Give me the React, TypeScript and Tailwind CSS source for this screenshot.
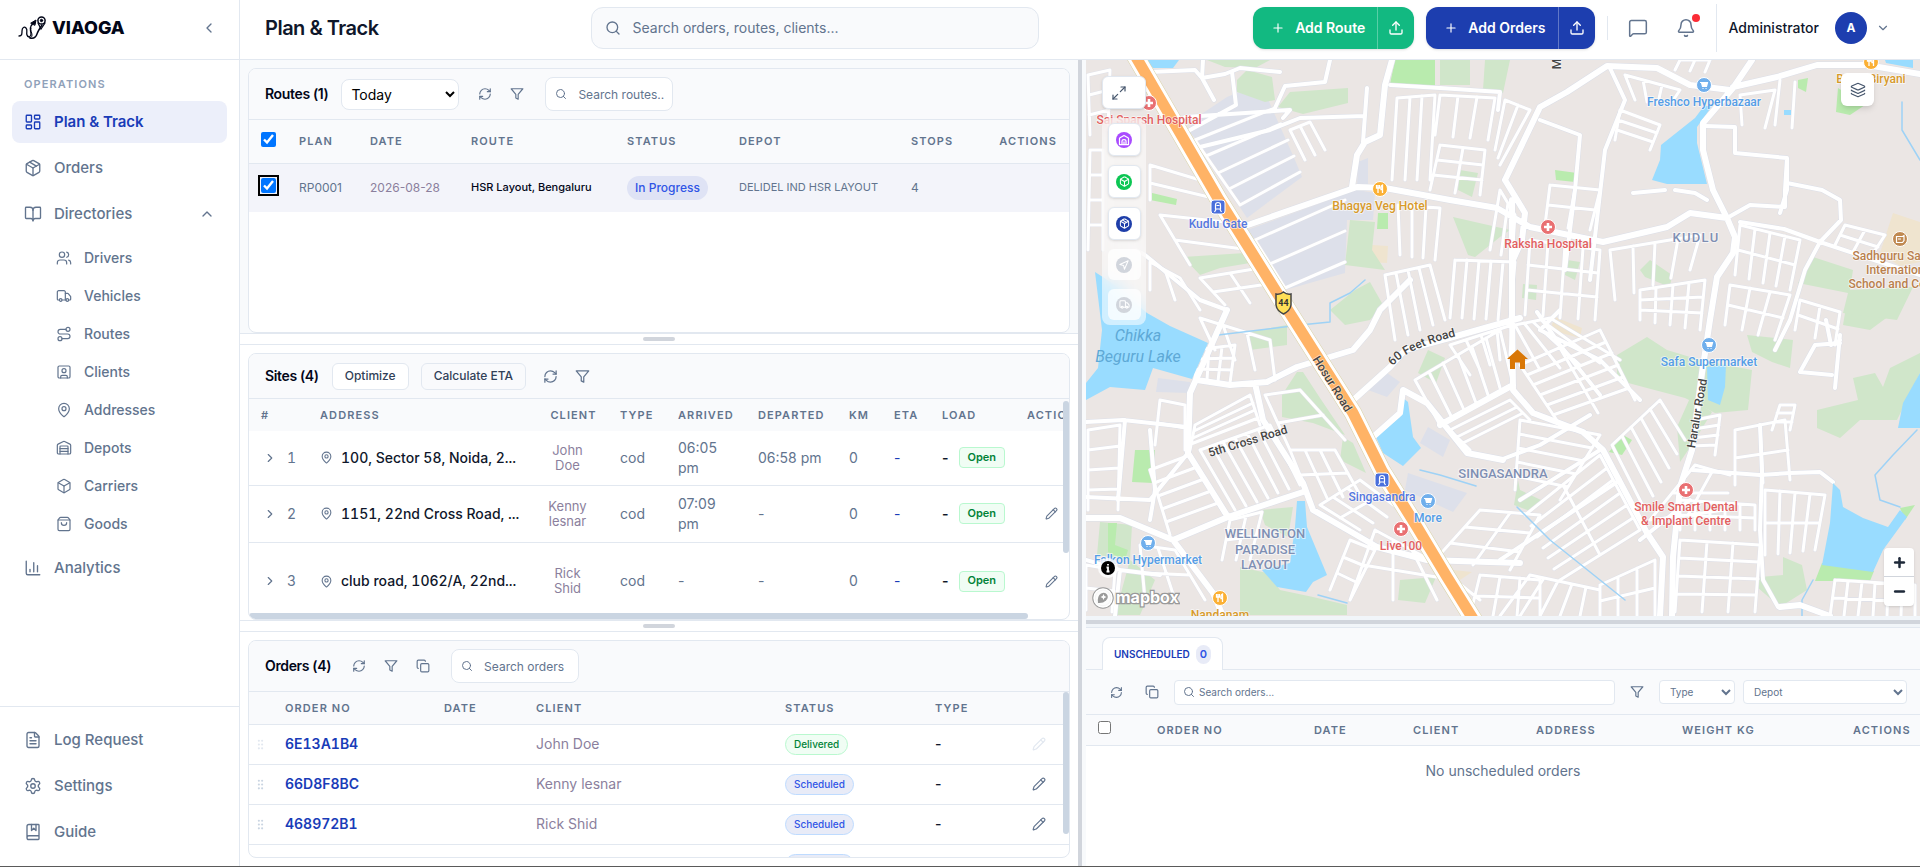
import type { ReactNode } from 'react';
import {
  Bell,
  BookMarked,
  BookOpen,
  Box,
  ChartColumn,
  ChevronDown,
  ChevronLeft,
  ChevronRight,
  ChevronUp,
  Copy,
  FileText,
  GripVertical,
  Layers,
  LayoutDashboard,
  MapPin,
  Maximize2,
  MessageSquare,
  Minus,
  Package,
  Pencil,
  Plus,
  RefreshCw,
  Route,
  Search,
  Settings,
  ShoppingBag,
  SquareUser,
  Truck,
  Upload,
  Users,
  Warehouse,
  type LucideIcon,
} from 'lucide-react';

type NavEntry = { label: string; icon: LucideIcon };

const directories: NavEntry[] = [
  { label: 'Drivers', icon: Users },
  { label: 'Vehicles', icon: Truck },
  { label: 'Routes', icon: Route },
  { label: 'Clients', icon: SquareUser },
  { label: 'Addresses', icon: MapPin },
  { label: 'Depots', icon: Warehouse },
  { label: 'Carriers', icon: Box },
  { label: 'Goods', icon: ShoppingBag },
];

const footerLinks: NavEntry[] = [
  { label: 'Log Request', icon: FileText },
  { label: 'Settings', icon: Settings },
  { label: 'Guide', icon: BookMarked },
];

const sites = [
  { id: 1, address: '100, Sector 58, Noida, 2...', client: 'John Doe', arrived: '06:05 pm', departed: '06:58 pm', height: 'h-[54px]', editable: false },
  { id: 2, address: '1151, 22nd Cross Road, ...', client: 'Kenny lesnar', arrived: '07:09 pm', departed: '-', height: 'h-[57px]', editable: true },
  { id: 3, address: 'club road, 1062/A, 22nd...', client: 'Rick Shid', arrived: '-', departed: '-', height: 'h-[78px]', editable: true },
];

const orders = [
  { no: '6E13A1B4', client: 'John Doe', status: 'Delivered' },
  { no: '66D8F8BC', client: 'Kenny lesnar', status: 'Scheduled' },
  { no: '468972B1', client: 'Rick Shid', status: 'Scheduled' },
  { no: '', client: '', status: 'Scheduled' },
];

const Funnel = ({ size = 14 }: { size?: number }) => (
  <svg width={size} height={size} viewBox="0 0 24 24" fill="none" stroke="currentColor" strokeWidth="2" strokeLinecap="round" strokeLinejoin="round">
    <path d="M22 3H2l8 9.46V19l4 2v-8.54L22 3z" />
  </svg>
);

const IconButton = ({ label, children }: { label: string; children: ReactNode }) => (
  <button type="button" aria-label={label} className="flex h-6 w-6 items-center justify-center text-slate-500">
    {children}
  </button>
);

/* ---------- Sidebar ---------- */

const Logo = () => (
  <a href="#" className="flex items-center gap-[6px] text-slate-950">
    <svg width="28" height="24" viewBox="0 0 28 24" fill="none" stroke="currentColor" strokeLinecap="round">
      <path d="M1 20c3 0 3-2 3-5s2-5 4-3 0 4 1 7 4 2 4-1-2-5 0-8l3-4" strokeWidth="1.3" />
      <path d="M12 22c4 1 6-1 7-4s3-6 5-9" strokeWidth="1.5" />
      <path d="M10 20c1 3 4 2 4-1s-2-4-1-7" strokeWidth="1" />
      <path d="m13 7 5-3-1 5z" fill="currentColor" />
      <circle cx="23.500" cy="4.500" r="3.600" strokeWidth="1.500" />
      <circle cx="23.500" cy="4.500" r="1.200" fill="currentColor" />
      <path d="m20 7 3 6 4-6" strokeWidth="1.3" />
    </svg>
    <span className="text-lg font-extrabold">VIAOGA</span>
  </a>
);

const NavItem = ({ label, icon: Icon, active, children }: NavEntry & { active?: boolean; children?: ReactNode }) => (
  <a
    href="#"
    className={
      active
        ? 'flex h-[42px] items-center gap-3 rounded-lg bg-[#eceffa] px-3 text-[15px] font-semibold text-blue-800'
        : 'flex h-[42px] items-center gap-3 rounded-lg px-3 text-[15px] font-medium text-slate-500'
    }
  >
    <Icon size={18} strokeWidth={1.8} />
    {label}
    {children}
  </a>
);

const Sidebar = () => (
  <aside className="flex w-[240px] shrink-0 flex-col border-r border-slate-200 bg-white">
    <div className="flex h-[60px] shrink-0 items-center justify-between border-b border-slate-200 pr-[22px] pb-1 pl-[18px]">
      <Logo />
      <button type="button" aria-label="Collapse sidebar" className="text-slate-500">
        <ChevronLeft size={16} />
      </button>
    </div>
    <nav className="flex flex-1 flex-col gap-1 px-3 pt-4">
      <h2 className="mb-1 px-3 text-[11px] leading-[17px] font-semibold tracking-widest text-slate-400">OPERATIONS</h2>
      <NavItem label="Plan & Track" icon={LayoutDashboard} active />
      <NavItem label="Orders" icon={Package} />
      <NavItem label="Directories" icon={BookOpen}>
        <ChevronUp size={16} className="ml-auto" />
      </NavItem>
      <ul>
        {directories.map(({ label, icon: Icon }) => (
          <li key={label}>
            <a href="#" className="flex h-[38px] items-center gap-3 pl-11 text-sm font-medium text-slate-500">
              <Icon size={16} strokeWidth={1.8} />
              {label}
            </a>
          </li>
        ))}
      </ul>
      <NavItem label="Analytics" icon={ChartColumn} />
    </nav>
    <div className="flex flex-col gap-1 border-t border-slate-200 px-3 pt-3 pb-[13px]">
      {footerLinks.map((item) => (
        <NavItem key={item.label} {...item} />
      ))}
    </div>
  </aside>
);

/* ---------- Header ---------- */

const SplitButton = ({ label, color }: { label: string; color: string }) => (
  <div className={`flex h-[42px] items-stretch overflow-hidden rounded-xl text-white shadow-sm ${color}`}>
    <button type="button" className="flex items-center gap-[10px] pr-3 pl-[18px] text-sm font-semibold">
      <Plus size={14} />
      {label}
    </button>
    <button type="button" aria-label={`Import for ${label}`} className="flex w-[37px] items-center justify-center border-l border-white/30">
      <Upload size={16} />
    </button>
  </div>
);

const Header = () => (
  <header className="flex h-[60px] shrink-0 items-center border-b border-slate-200 bg-white pr-[30px] pb-1 pl-[25px]">
    <h1 className="text-xl font-semibold tracking-tight text-slate-900">Plan &amp; Track</h1>
    <label className="mr-auto ml-[212px] flex h-[42px] w-[448px] items-center gap-3 rounded-xl border border-slate-200 bg-[#f9fafc] px-[13px]">
      <Search size={16} className="text-slate-500" />
      <input type="text" aria-label="Search" placeholder="Search orders, routes, clients..." className="h-10 flex-1 bg-transparent text-sm outline-none placeholder:text-slate-500" />
    </label>
    <div className="flex items-center gap-3">
      <SplitButton label="Add Route" color="bg-[#12b981]" />
      <SplitButton label="Add Orders" color="bg-[#1d3eaf]" />
    </div>
    <span className="ml-3 h-6 w-px bg-slate-200" />
    <button type="button" aria-label="Messages" className="ml-5 text-slate-500">
      <MessageSquare size={20} strokeWidth={1.8} />
    </button>
    <button type="button" aria-label="Notifications" className="relative ml-7 text-slate-500">
      <Bell size={20} strokeWidth={1.8} />
      <span className="absolute -top-1 right-[-4px] h-2 w-2 rounded-full bg-red-500" />
    </button>
    <span className="ml-5 h-12 w-px bg-slate-200" />
    <button type="button" className="ml-3 flex items-center text-sm font-medium text-slate-900">
      Administrator
      <span className="ml-4 flex h-8 w-8 items-center justify-center rounded-full bg-[#1d3eaf] text-xs font-bold text-white">A</span>
      <ChevronDown size={14} className="ml-[9px] text-slate-500" />
    </button>
  </header>
);

/* ---------- Shared panel pieces ---------- */

const RowHandle = () => (
  <div className="flex items-center justify-center border-y border-slate-200 bg-white">
    <span className="h-1 w-8 rounded-full bg-gray-300" />
  </div>
);

const SearchBox = ({ label, placeholder }: { label: string; placeholder: string }) => (
  <label className="ml-1 flex h-[34px] w-32 items-center gap-[11px] rounded-lg border border-slate-200 bg-white pl-[9px]">
    <Search size={12} className="shrink-0 text-slate-500" />
    <input type="text" aria-label={label} placeholder={placeholder} className="h-8 w-full min-w-0 bg-transparent text-xs outline-none placeholder:text-slate-500" />
  </label>
);

const PanelTitle = ({ children }: { children: ReactNode }) => (
  <h2 className="text-sm font-semibold tracking-tight text-slate-950">{children}</h2>
);

const HeadCell = ({ children, align = 'text-left' }: { children?: ReactNode; align?: string }) => (
  <th scope="col" className={`pl-3 text-[11px] font-semibold tracking-widest whitespace-nowrap text-slate-500 ${align}`}>
    {children}
  </th>
);

/* ---------- Routes ---------- */

const RoutesPanel = () => (
  <section className="flex min-h-0 flex-col bg-slate-50 px-2 pt-2">
    <div className="flex min-h-0 flex-1 flex-col overflow-hidden rounded-lg border border-slate-200 bg-white">
      <div className="flex h-[51px] shrink-0 items-center border-b border-slate-200 bg-[#f9fafc] px-4">
        <PanelTitle>Routes (1)</PanelTitle>
        <select aria-label="Period" className="ml-[13px] h-[31px] w-[118px] rounded-lg border border-slate-200 bg-white px-[5px] text-sm text-black">
          <option>Today</option>
        </select>
        <div className="ml-[14px] flex items-center gap-2">
          <IconButton label="Refresh routes"><RefreshCw size={14} /></IconButton>
          <IconButton label="Filter routes"><Funnel size={14} /></IconButton>
          <div className="pl-1"><SearchBox label="Search routes" placeholder="Search routes.." /></div>
        </div>
      </div>
      <table className="w-full table-fixed">
        <colgroup>
          <col className="w-[38px]" />
          <col className="w-[71px]" />
          <col className="w-[101px]" />
          <col className="w-[156px]" />
          <col className="w-[112px]" />
          <col className="w-[172px]" />
          <col className="w-[86px]" />
          <col />
        </colgroup>
        <thead>
          <tr className="h-[43px] border-b border-slate-200 bg-[#f9fafc]">
            <th className="pl-3 text-left">
              <input type="checkbox" aria-label="Select all routes" defaultChecked className="mb-1 block h-[15px] w-[15px]" />
            </th>
            <HeadCell>PLAN</HeadCell>
            <HeadCell>DATE</HeadCell>
            <HeadCell>ROUTE</HeadCell>
            <HeadCell>STATUS</HeadCell>
            <HeadCell>DEPOT</HeadCell>
            <HeadCell>STOPS</HeadCell>
            <HeadCell align="pr-3 text-right">ACTIONS</HeadCell>
          </tr>
        </thead>
        <tbody>
          <tr className="h-[49px] bg-[#f3f4fa] text-xs whitespace-nowrap text-slate-500">
            <td className="pl-3">
              <input type="checkbox" aria-label="Select RP0001" defaultChecked className="mb-1 block h-[15px] w-[15px] rounded-[3px] outline-2 outline-offset-1 outline-black" />
            </td>
            <td className="pl-3">RP0001</td>
            <td className="pl-3 text-[#8b7f9d]">2026-08-28</td>
            <td className="pl-3 text-[11px] font-medium text-slate-950">HSR Layout, Bengaluru</td>
            <td className="pl-3">
              <span className="inline-flex h-6 items-center rounded-full bg-[#dfe3f5] px-2 font-medium text-[#2f55e6]">In Progress</span>
            </td>
            <td className="pl-3 text-[11px]">DELIDEL IND HSR LAYOUT</td>
            <td className="pl-3">4</td>
            <td />
          </tr>
        </tbody>
      </table>
    </div>
  </section>
);

/* ---------- Sites ---------- */

const SitesPanel = () => (
  <section className="flex min-h-0 flex-col bg-white px-2 pt-2">
    <div className="relative flex min-h-0 flex-1 flex-col overflow-hidden rounded-lg border border-slate-200">
      <div className="flex h-[45px] shrink-0 items-center border-b border-slate-200 bg-[#f9fafc] px-4">
        <PanelTitle>Sites (4)</PanelTitle>
        <button type="button" className="ml-[13px] h-[27px] rounded-md border border-slate-200 bg-white px-3 text-xs font-medium text-slate-700">Optimize</button>
        <button type="button" className="ml-3 h-[27px] rounded-md border border-slate-200 px-3 text-xs font-medium text-slate-700">Calculate ETA</button>
        <div className="ml-3 flex items-center gap-2">
          <IconButton label="Refresh sites"><RefreshCw size={15} /></IconButton>
          <IconButton label="Filter sites"><Funnel size={15} /></IconButton>
        </div>
      </div>
      <div className="min-h-0 flex-1 overflow-hidden">
        <table className="w-full min-w-[880px] table-fixed">
          <colgroup>
            <col className="w-[59px]" />
            <col className="w-[219px]" />
            <col className="w-[81px]" />
            <col className="w-[58px]" />
            <col className="w-[80px]" />
            <col className="w-[91px]" />
            <col className="w-[45px]" />
            <col className="w-[48px]" />
            <col className="w-[85px]" />
            <col />
          </colgroup>
          <thead>
            <tr className="h-8 bg-[#f9fafc]">
              <HeadCell>#</HeadCell>
              <HeadCell>ADDRESS</HeadCell>
              <HeadCell align="pr-0 text-center">CLIENT</HeadCell>
              <HeadCell>TYPE</HeadCell>
              <HeadCell>ARRIVED</HeadCell>
              <HeadCell>DEPARTED</HeadCell>
              <HeadCell>KM</HeadCell>
              <HeadCell>ETA</HeadCell>
              <HeadCell>LOAD</HeadCell>
              <HeadCell>ACTIONS</HeadCell>
            </tr>
          </thead>
          <tbody>
            {sites.map((site) => (
              <tr key={site.id} className={`${site.height} border-b border-slate-200 text-sm text-slate-500`}>
                <td className="pl-[14px]">
                  <button type="button" aria-label={`Expand site ${site.id}`} className="flex items-center gap-[10px] tabular-nums">
                    <ChevronRight size={14} />
                    {site.id}
                  </button>
                </td>
                <td className="pl-3">
                  <span className="flex items-center gap-2 font-medium whitespace-nowrap text-slate-900 tabular-nums">
                    <MapPin size={13} className="text-slate-500" />
                    {site.address}
                  </span>
                </td>
                <td className="px-5 text-center text-[13px] leading-[15px] text-[#8b7f9d]">{site.client}</td>
                <td className="pl-3">cod</td>
                <td className="px-3">{site.arrived}</td>
                <td className="pl-3 whitespace-nowrap">{site.departed}</td>
                <td className="pl-3">0</td>
                <td className="pl-3 text-blue-800">-</td>
                <td className="pl-3">
                  <span className="flex items-center gap-[10px] font-semibold text-slate-900">
                    -
                    <span className="flex h-[21px] items-center rounded border border-green-200 bg-green-50 px-2 text-[11px] text-green-700">Open</span>
                  </span>
                </td>
                <td className="pl-[30px]">
                  {site.editable && (
                    <button type="button" aria-label={`Edit site ${site.id}`} className="block">
                      <Pencil size={13} />
                    </button>
                  )}
                </td>
              </tr>
            ))}
          </tbody>
        </table>
      </div>
      <span className="absolute top-[47px] right-0 h-[152px] w-[6px] rounded-full bg-slate-300" />
      <span className="absolute bottom-0 left-0 h-[6px] w-[95%] rounded-full bg-slate-300" />
    </div>
  </section>
);

/* ---------- Orders ---------- */

const OrdersPanel = () => (
  <section className="flex min-h-0 flex-col bg-white p-2">
    <div className="relative flex min-h-0 flex-1 flex-col overflow-hidden rounded-lg border border-slate-200">
      <div className="flex h-[51px] shrink-0 items-center border-b border-slate-200 bg-[#f9fafc] px-4">
        <PanelTitle>Orders (4)</PanelTitle>
        <div className="ml-4 flex items-center gap-2">
          <IconButton label="Refresh orders"><RefreshCw size={14} /></IconButton>
          <IconButton label="Filter orders"><Funnel size={14} /></IconButton>
          <IconButton label="Copy orders"><Copy size={14} /></IconButton>
          <div className="pl-1"><SearchBox label="Search orders" placeholder="Search orders" /></div>
        </div>
      </div>
      <div className="min-h-0 flex-1 overflow-hidden">
        <table className="w-full table-fixed">
          <colgroup>
            <col className="w-6" />
            <col className="w-[159px]" />
            <col className="w-[92px]" />
            <col className="w-[249px]" />
            <col className="w-[150px]" />
            <col />
            <col className="w-[50px]" />
          </colgroup>
          <thead>
            <tr className="h-8 border-b border-slate-200 bg-[#f9fafc]">
              <HeadCell />
              <HeadCell>ORDER NO</HeadCell>
              <HeadCell>DATE</HeadCell>
              <HeadCell>CLIENT</HeadCell>
              <HeadCell>STATUS</HeadCell>
              <HeadCell>TYPE</HeadCell>
              <HeadCell />
            </tr>
          </thead>
          <tbody>
            {orders.map((order, index) => {
              const delivered = order.status === 'Delivered';
              return (
                <tr key={index} className="h-10 border-b border-slate-200 text-sm">
                  <td className={delivered ? 'pl-[5px] text-slate-200' : 'pl-[5px] text-slate-300'}>
                    <GripVertical size={13} />
                  </td>
                  <td className="pl-3 font-semibold text-blue-800 tabular-nums">{order.no}</td>
                  <td />
                  <td className="pl-3 text-[#8b7f9d]">{order.client}</td>
                  <td className="pl-3">
                    <span
                      className={
                        delivered
                          ? 'inline-flex h-[21px] items-center rounded-full border border-green-200 bg-green-50 px-2 align-middle text-[10px] font-medium text-green-700'
                          : 'inline-flex h-[21px] items-center rounded-full border border-blue-200 bg-[#e8ebf7] px-2 align-middle text-[10px] font-medium text-[#2f55e6]'
                      }
                    >
                      {order.status}
                    </span>
                  </td>
                  <td className="pl-3 font-medium text-slate-900">-</td>
                  <td className={delivered ? 'pl-[13px] text-slate-200' : 'pl-[13px] text-slate-500'}>
                    <button type="button" aria-label={`Edit order ${order.no}`} disabled={delivered} className="block">
                      <Pencil size={14} />
                    </button>
                  </td>
                </tr>
              );
            })}
          </tbody>
        </table>
      </div>
      <span className="absolute top-[51px] right-0 h-[142px] w-[6px] rounded-full bg-slate-300" />
    </div>
  </section>
);

/* ---------- Map ---------- */

const LAND = {
  industrial: [
    '1257,85 1267,97 1283,133 1295,160 1302,177 1247,218 1222,180 1197,140 1187,130 1203,113 1227,97',
    '1247,230 1357,190 1375,193 1373,220 1347,220 1345,273 1285,290',
    '1358,162 1368,158 1368,190 1357,188',
    '1158,378 1190,382 1190,393 1156,392',
    '1387,373 1400,382 1387,397 1368,390',
    '1428,427 1450,440 1443,457 1420,443',
    '1408,473 1467,493 1453,512 1405,490',
  ],
  sand: [
    '1893,213 1920,222 1920,262 1900,266 1880,253',
    '1555,317 1582,328 1580,338 1550,330',
    '1372,245 1388,246 1387,263 1370,262',
    '1453,570 1472,572 1460,580',
  ],
  park: [
    '1207,60 1270,60 1255,68 1225,67',
    '1237,80 1247,70 1272,77 1275,100 1265,102 1237,92',
    '1278,107 1290,92 1348,88 1348,103 1303,114',
    '1440,60 1470,60 1470,85 1440,85',
    '1485,60 1510,60 1503,93 1483,90',
    '1183,257 1245,253 1250,263 1220,268 1200,275',
    '1350,220 1375,222 1372,250 1385,270 1345,265',
    '1453,217 1510,230 1500,237 1475,257 1468,255',
    '1330,310 1355,290 1370,282 1383,305 1370,320 1345,325',
    '1247,332 1287,325 1287,345 1250,350',
    '1282,395 1297,372 1303,372 1320,398 1345,435 1313,423 1282,417',
    '1343,437 1353,443 1366,473 1340,460',
    '1428,350 1445,358 1436,383 1418,373',
    '1100,522 1132,525 1130,560 1097,555',
    '1130,560 1155,580 1140,615 1115,615',
    '1260,510 1293,507 1288,537 1265,525',
    '1240,567 1267,573 1280,590 1313,597 1347,605 1347,615 1240,615',
    '1400,580 1436,577 1425,603 1398,600',
    '1617,355 1647,337 1667,350 1700,360 1752,370 1748,410 1715,413 1685,398 1647,388 1617,380',
    '1690,398 1712,412 1695,440 1680,462 1677,427',
    '1747,335 1793,340 1790,368 1772,362 1752,352',
    '1845,313 1893,313 1870,330 1843,325',
    '1817,410 1858,400 1853,378 1875,373 1883,387 1890,368 1920,353 1920,373 1897,420 1860,420 1840,438 1817,428',
    '1813,257 1853,270 1850,290 1913,287 1897,320 1843,313 1848,293 1798,283',
    '1783,557 1802,565 1807,590 1780,607 1757,587 1760,577 1783,575',
    '1460,170 1478,173 1472,197 1458,190',
    '1567,260 1580,262 1575,280 1565,275',
    '1523,284 1537,285 1536,300 1522,298',
    '1640,270 1650,260 1672,275 1670,287 1645,277',
    '1518,480 1520,490 1541,500 1530,511 1514,505',
  ],
  lawn: [
    '1395,60 1435,60 1435,86 1390,84',
    '1135,450 1155,450 1153,483 1132,482',
    '1108,523 1117,523 1115,545 1128,550 1125,560 1108,552',
    '1623,435 1632,440 1622,455 1609,452',
    '1555,170 1577,173 1575,182 1556,180',
    '1798,80 1808,78 1806,92 1798,88',
    '1838,88 1865,105 1850,115 1836,112',
    '1378,213 1388,213 1388,229 1377,229',
    '1148,192 1177,199 1176,205 1150,200',
    '1815,581 1822,563 1874,571 1870,581',
    '1900,508 1915,505 1905,520',
  ],
  water: [
    '1146,60 1179,60 1173,68 1153,68',
    '1095,272 1115,285 1147,313 1170,326 1208,343 1192,379 1153,368 1145,390 1110,387 1086,400 1086,383 1098,368 1102,330',
    '1712,106 1697,127 1697,143 1707,184 1667,184 1652,180 1660,160 1661,145 1695,118 1704,106',
    '1403,398 1408,402 1413,437 1421,448 1403,466 1383,453 1376,437 1400,417',
    '1297,501 1305,501 1307,527 1327,575 1313,582 1306,592 1277,587 1262,570 1290,563 1295,527',
    '1707,367 1726,365 1725,387 1720,405 1708,400',
    '1920,373 1903,403 1898,428 1920,428',
    '1833,483 1840,490 1843,507 1863,518 1888,527 1900,510 1907,517 1883,550 1873,572 1822,565 1830,523',
    '1885,60 1913,60 1913,68 1886,63',
    '1784,110 1791,110 1791,115 1784,115',
  ],
};

const canals = [
  'M1917 430 1893 455 1875 475 1880 500 1900 507',
  'M1813 580 1802 600 1802 616',
  'M1517 507 1550 540 1600 580 1625 600',
  'M1902 102V130L1920 160',
  'M1365 280 1350 293 1330 303V322L1300 325 1218 335',
  'M1420 470 1440 475 1476 486',
  'M1318 595 1347 603',
];

const mainRoads = [
  'M1245 226 1357 187 1385 188 1450 200 1497 208 1530 227 1603 242 1667 227 1690 213 1727 218',
  'M1352 187 1357 155 1365 142 1380 135 1385 85 1392 60',
  'M1505 180 1540 107 1567 92 1607 66 1657 68 1690 85 1730 90',
  'M1752 60 1733 88 1703 123V150L1713 190 1727 218 1735 237 1733 253 1717 277 1710 320 1702 373 1692 450 1680 487 1673 557 1672 616',
  'M1733 87 1777 77 1817 65 1867 65 1920 74',
  'M1227 310 1190 393 1188 453 1228 517',
  'M1197 380 1230 385 1267 382 1297 367 1353 350 1370 330 1380 310 1410 280',
  'M1255 383 1263 420 1303 483 1313 510 1353 533 1377 547 1427 560 1520 563',
  'M1086 518 1120 518 1173 540 1213 593 1223 616',
  'M1173 540 1228 517 1303 492',
  'M1350 403 1390 367 1405 350 1453 337 1520 318',
  'M1373 437 1400 413 1403 390 1427 403 1467 453 1503 460',
  'M1512 200V310L1513 390 1533 413 1583 432 1603 450 1647 533 1663 557 1660 616',
  'M1505 180 1525 213 1522 240 1512 262',
  'M1780 607 1800 605 1830 616',
  'M1440 425 1513 385',
];

const sideRoads = [
  'M1086 422 1123 420 1187 427',
  'M1390 85 1440 88 1500 92 1498 110',
  'M1150 72 1195 70 1202 78 1225 74 1240 68 1280 72',
  'M1203 60 1202 78 1214 100M1232 72 1236 105 1190 130',
  'M1185 117 1290 110 1283 118M1275 108 1285 86 1325 82 1330 60',
  'M1365 116 1300 118 1270 130 1200 147M1367 88 1363 142',
  'M1118 240 1145 255 1200 300 1227 310',
  'M1086 497 1150 500 1188 453M1125 420 1118 500M1150 430 1155 490 1150 520',
  'M1740 222 1784 229 1820 242 1880 262 1920 275',
  'M1727 218 1750 205 1785 207 1785 190 1787 158 1735 153V127L1705 126',
  'M1787 158 1787 190 1780 213M1787 183 1822 190 1840 200 1841 220 1820 242',
  'M1820 242 1805 270 1790 320 1775 350',
  'M1692 470 1760 475 1790 473 1820 472 1833 482',
  'M1760 425 1762 472 1760 530 1763 580 1778 607',
  'M1826 320 1831 345 1840 340M1840 335 1835 388M1840 343 1815 345 1800 372 1832 375',
  'M1540 120 1580 135 1575 190 1565 270',
  'M1610 68 1625 100 1605 150 1590 280',
  'M1675 190 1695 193 1707 200M1633 193 1665 190',
  'M1560 310 1540 330 1600 360 1640 400M1537 312 1560 345 1600 395',
  'M1500 460 1540 445 1590 415M1520 500 1600 450',
  'M1640 540 1690 500M1500 560 1590 500 1620 480',
  'M1086 560 1120 570 1115 616M1120 570 1160 575',
];

// Street grids: corners a, b, c, d, then streets from side ab to dc and from ad to bc
const grids: number[][] = [
  [1088, 75, 1110, 70, 1108, 130, 1090, 135, 1, 3],
  [1090, 150, 1103, 150, 1103, 250, 1088, 250, 1, 4],
  [1150, 165, 1200, 180, 1225, 215, 1150, 200, 1, 2],
  [1160, 215, 1225, 222, 1260, 275, 1190, 265, 1, 2],
  [1200, 278, 1260, 268, 1275, 300, 1225, 305, 2, 2],
  [1195, 140, 1240, 205, 1300, 172, 1275, 108, 4, 1],
  [1255, 240, 1285, 288, 1345, 262, 1345, 200, 2, 1],
  [1290, 130, 1310, 122, 1325, 150, 1305, 160, 2, 1],
  [1397, 98, 1435, 95, 1430, 180, 1392, 180, 3, 1],
  [1440, 95, 1495, 98, 1488, 140, 1435, 135, 3, 1],
  [1440, 145, 1485, 150, 1480, 195, 1430, 190, 2, 3],
  [1398, 205, 1440, 208, 1435, 260, 1400, 255, 3, 1],
  [1455, 260, 1515, 262, 1510, 320, 1450, 318, 5, 1],
  [1385, 275, 1430, 265, 1445, 320, 1395, 340, 4, 1],
  [1505, 100, 1530, 110, 1500, 165, 1495, 150, 2, 1],
  [1500, 190, 1515, 215, 1512, 260, 1490, 250, 2, 1],
  [1550, 185, 1600, 190, 1590, 230, 1545, 225, 2, 2],
  [1530, 240, 1600, 250, 1595, 320, 1525, 315, 4, 3],
  [1610, 250, 1700, 235, 1690, 270, 1615, 300, 4, 1],
  [1640, 290, 1705, 280, 1700, 330, 1640, 320, 4, 3],
  [1620, 110, 1660, 125, 1650, 150, 1615, 140, 1, 3],
  [1625, 75, 1680, 90, 1670, 105, 1635, 100, 3, 1],
  [1680, 60, 1710, 60, 1705, 72, 1675, 70, 2, 1],
  [1740, 95, 1775, 90, 1765, 128, 1742, 125, 1, 1],
  [1780, 80, 1795, 82, 1792, 128, 1775, 125, 1, 0],
  [1740, 225, 1800, 240, 1790, 290, 1735, 275, 4, 2],
  [1730, 285, 1790, 295, 1775, 340, 1725, 325, 3, 2],
  [1800, 300, 1840, 312, 1835, 345, 1795, 330, 2, 2],
  [1845, 225, 1885, 235, 1870, 258, 1835, 245, 2, 2],
  [1415, 380, 1500, 330, 1512, 380, 1440, 425, 6, 1],
  [1450, 345, 1512, 325, 1510, 355, 1470, 375, 4, 1],
  [1520, 365, 1600, 330, 1635, 400, 1560, 425, 2, 6],
  [1515, 325, 1550, 318, 1620, 360, 1540, 370, 4, 1],
  [1450, 430, 1510, 400, 1530, 420, 1470, 450, 1, 3],
  [1520, 420, 1600, 435, 1560, 500, 1515, 490, 1, 5],
  [1600, 455, 1640, 530, 1560, 580, 1525, 515, 6, 2],
  [1612, 445, 1660, 400, 1685, 440, 1645, 510, 5, 1],
  [1650, 520, 1695, 465, 1730, 475, 1725, 510, 2, 2],
  [1680, 500, 1755, 505, 1755, 530, 1680, 530, 5, 2],
  [1680, 540, 1760, 545, 1755, 612, 1675, 612, 3, 4],
  [1695, 420, 1720, 415, 1715, 455, 1690, 455, 1, 4],
  [1735, 430, 1785, 420, 1790, 480, 1735, 485, 2, 2],
  [1765, 490, 1825, 495, 1815, 550, 1765, 555, 4, 2],
  [1780, 405, 1795, 405, 1790, 430, 1772, 430, 1, 3],
  [1530, 575, 1600, 590, 1600, 616, 1500, 616, 5, 1],
  [1600, 585, 1655, 560, 1655, 616, 1600, 616, 3, 2],
  [1835, 580, 1915, 585, 1915, 616, 1830, 616, 6, 2],
  [1480, 510, 1540, 515, 1510, 570, 1435, 560, 2, 3],
  [1375, 530, 1430, 560, 1480, 600, 1350, 600, 3, 2],
  [1480, 575, 1540, 580, 1540, 616, 1470, 616, 3, 2],
  [1195, 425, 1250, 395, 1260, 425, 1190, 450, 1, 4],
  [1200, 450, 1270, 425, 1300, 485, 1235, 510, 6, 1],
  [1150, 470, 1190, 455, 1225, 515, 1170, 535, 1, 5],
  [1196, 350, 1235, 345, 1230, 383, 1195, 378, 3, 3],
  [1200, 318, 1270, 340, 1275, 380, 1215, 350, 3, 1],
  [1265, 395, 1300, 390, 1345, 440, 1290, 450, 1, 2],
  [1290, 450, 1335, 450, 1360, 495, 1310, 500, 3, 2],
  [1320, 505, 1360, 480, 1400, 510, 1360, 530, 3, 2],
  [1088, 430, 1120, 425, 1118, 510, 1088, 510, 1, 4],
  [1160, 400, 1185, 405, 1185, 450, 1155, 445, 1, 2],
  [1230, 520, 1262, 512, 1250, 560, 1222, 560, 2, 2],
  [1140, 545, 1175, 550, 1205, 600, 1145, 600, 2, 2],
  [1086, 565, 1115, 570, 1112, 612, 1086, 610, 1, 2],
  [1150, 262, 1180, 278, 1200, 310, 1150, 290, 2, 1],
  [1350, 540, 1375, 550, 1350, 600, 1330, 590, 1, 3],
];

const gridPath = grids
  .map(([ax, ay, bx, by, cx, cy, dx, dy, n, m]) => {
    const mix = (p: number, q: number, t: number) => Math.round(p + (q - p) * t);
    let path = '';
    for (let i = 0; i <= n; i++) {
      const t = n ? i / n : 0;
      path += `M${mix(ax, bx, t)} ${mix(ay, by, t)}L${mix(dx, cx, t)} ${mix(dy, cy, t)}`;
    }
    for (let i = 0; i < m; i++) {
      const t = i / m;
      path += `M${mix(ax, dx, t)} ${mix(ay, dy, t)}L${mix(bx, cx, t)} ${mix(by, cy, t)}`;
    }
    return path;
  })
  .join('');

const highway = 'M1133 52 1219 200 1289 312 1353 413 1382 471 1417 527 1447 577 1475 622';

const places = [
  { x: 1149, y: 103, kind: 'hospital', lines: ['Sai Sparsh Hospital'] },
  { x: 1218, y: 207, kind: 'metro', lines: ['Kudlu Gate'] },
  { x: 1380, y: 189, kind: 'food', lines: ['Bhagya Veg Hotel'] },
  { x: 1704, y: 85, kind: 'shop', lines: ['Freshco Hyperbazaar'] },
  { x: 1871, y: 62, kind: 'food', lines: ['Bawa Biryani'] },
  { x: 1548, y: 227, kind: 'hospital', lines: ['Raksha Hospital'] },
  { x: 1900, y: 239, kind: 'school', lines: ['Sadhguru Sainath', 'International', 'School and College'] },
  { x: 1382, y: 480, kind: 'metro', lines: ['Singasandra'] },
  { x: 1428, y: 501, kind: 'shop', lines: ['More'] },
  { x: 1401, y: 529, kind: 'hospital', lines: ['Live100'] },
  { x: 1148, y: 543, kind: 'shop', lines: ['Falkon Hypermarket'] },
  { x: 1220, y: 598, kind: 'food', lines: ['Nandanam'] },
  { x: 1709, y: 345, kind: 'shop', lines: ['Safa Supermarket'] },
  { x: 1686, y: 490, kind: 'hospital', lines: ['Smile Smart Dental', '& Implant Centre'] },
];

const placeColors: Record<string, { text: string; dot: string }> = {
  hospital: { text: '#e2605f', dot: '#e97072' },
  metro: { text: '#5577de', dot: '#4a6fdc' },
  food: { text: '#d79a2b', dot: '#fbb034' },
  shop: { text: '#559de6', dot: '#70afec' },
  school: { text: '#b9804d', dot: '#c08a52' },
};

const PlaceGlyph = ({ kind }: { kind: string }) => {
  if (kind === 'hospital') return <path d="M-1.300-4h2.600v2.700H4v2.600H1.300V4h-2.600V1.300H-4v-2.600h2.700z" fill="#fff" />;
  if (kind === 'food') return <path d="M-2-4v8M-3.500-4v3h3v-3M2.500 4v-8q-2 1-1.500 4.500h1.500" fill="none" stroke="#fff" strokeWidth="1.300" />;
  if (kind === 'shop') return <path d="M-4-2.500h1.500l1 4h4l1-4h-6zM-1 3.500h.1M2 3.500h.1" fill="#fff" stroke="#fff" strokeWidth="1.200" strokeLinecap="round" />;
  if (kind === 'metro')
    return (
      <g fill="none" stroke="#fff" strokeWidth="1.200">
        <path d="M-2.500 2v-4q0-2.500 2.500-2.500t2.500 2.500v4zM-2 2.500-3.500 5M2 2.500 3.500 5M-1.500-1.500h3" />
      </g>
    );
  return <path d="M-3.500-2.500h6l1.500-1v5l-1.500 2h-6zM-2 0h3" fill="none" stroke="#fff" strokeWidth="1.200" />;
};

const MapCanvas = () => (
  <svg viewBox="1086 60 834 556" preserveAspectRatio="xMidYMid slice" className="block h-full w-full bg-[#ebe6e4] font-['Roboto',sans-serif] font-medium" role="img" aria-label="Map">
    {LAND.industrial.map((p) => <polygon key={p} points={p} fill="#dde0ea" />)}
    {LAND.sand.map((p) => <polygon key={p} points={p} fill="#efe4cf" />)}
    {LAND.park.map((p) => <polygon key={p} points={p} fill="#d0e6ca" />)}
    {LAND.lawn.map((p) => <polygon key={p} points={p} fill="#b9ebae" />)}
    <g fill="none" strokeLinecap="round" strokeLinejoin="round">
      <path d={gridPath} stroke="#e0e1e8" strokeWidth="4" />
      <path d={sideRoads.join('')} stroke="#dcdfe8" strokeWidth="5" />
      <path d={mainRoads.join('')} stroke="#dcdfe8" strokeWidth="7" />
      <path d={gridPath} stroke="#fff" strokeWidth="3" />
      <path d={sideRoads.join('')} stroke="#fff" strokeWidth="4" />
      <path d={canals.join('')} stroke="#9ed2f6" strokeWidth="1.500" />
    </g>
    {LAND.water.map((p) => <polygon key={p} points={p} fill="#99dcff" />)}
    <g fill="none" strokeLinecap="round" strokeLinejoin="round">
      <path d={mainRoads.join('')} stroke="#fff" strokeWidth="6" />
      <path d={highway} stroke="#d9d2a8" strokeWidth="18" />
      <path d={highway} stroke="#fff" strokeWidth="17" />
      <path d={highway} stroke="#ffb366" strokeWidth="11" />
    </g>

    {places.map((place) => {
      const { text, dot } = placeColors[place.kind];
      return (
        <g key={place.lines[0]}>
          {place.kind === 'metro' ? (
            <rect x={place.x - 7} y={place.y - 7} width="14" height="14" rx="3" fill={dot} stroke="#fff" />
          ) : (
            <circle cx={place.x} cy={place.y} r="7.500" fill={dot} stroke="#fff" />
          )}
          <g transform={`translate(${place.x} ${place.y})`}>
            <PlaceGlyph kind={place.kind} />
          </g>
          <g fill={text} stroke="#fff" strokeWidth="1.500" strokeOpacity="0.700" paintOrder="stroke" fontSize="12" textAnchor="middle">
            {place.lines.map((line, i) => (
              <text key={line} x={place.x} y={place.y + 21 + i * 14}>{line}</text>
            ))}
          </g>
        </g>
      );
    })}

    <g fill="#7f8fb3" stroke="#fff" strokeWidth="2" strokeOpacity="0.600" paintOrder="stroke" fontSize="13" textAnchor="middle">
      <text x="1696" y="242" className="tracking-widest">KUDLU</text>
      <text x="1503" y="478">SINGASANDRA</text>
      <text x="1265" y="538">WELLINGTON</text>
      <text x="1265" y="554">PARADISE</text>
      <text x="1265" y="569">LAYOUT</text>
    </g>
    <g fill="#5ea9d6" fontSize="16" fontStyle="italic" fontWeight="400" textAnchor="middle">
      <text x="1138" y="341">Chikka</text>
      <text x="1138" y="362">Beguru Lake</text>
    </g>
    <g fill="#454545" stroke="#fff" strokeWidth="1.500" strokeOpacity="0.600" paintOrder="stroke" fontSize="12" textAnchor="middle">
      <text transform="translate(1329 386) rotate(58)">Hosur Road</text>
      <text transform="translate(1249 445) rotate(-17)">5th Cross Road</text>
      <text transform="translate(1701 414) rotate(-80)">Haralur Road</text>
      <text transform="translate(1561 64) rotate(-90)">M</text>
      <path id="feet-road" d="M1393 366Q1408 347 1465 334" fill="none" stroke="none" />
      <text textAnchor="start"><textPath href="#feet-road">60 Feet Road</textPath></text>
    </g>

    <path d="M1276 294q4 1 7.500-2 3.500 3 7.500 2v11q-1 6-7.500 9-6.500-3-7.500-9z" fill="#ffdf57" stroke="#454545" strokeWidth="1.500" />
    <text x="1283.500" y="306" fontSize="9" fontWeight="700" fill="#333" textAnchor="middle">44</text>
    <path d="m1517.500 349.500 10.500 9.500h-3v10h-5v-6.500h-5v6.500h-5v-10h-3z" fill="#d97706" />
  </svg>
);

const mapTools = [
  { label: 'Depots', icon: Warehouse, dot: 'bg-[#a94bff]', enabled: true },
  { label: 'Orders', icon: Box, dot: 'bg-[#0cc653]', enabled: true },
  { label: 'Planned orders', icon: Package, dot: 'bg-[#1e3ea9]', enabled: true },
  { label: 'Navigation', icon: MapPin, dot: 'bg-gray-300', enabled: false },
  { label: 'Vehicles', icon: Truck, dot: 'bg-gray-300', enabled: false },
];

const NavArrow = () => (
  <svg width="10" height="10" viewBox="0 0 24 24" fill="none" stroke="currentColor" strokeWidth="2.500" strokeLinejoin="round">
    <path d="m2 11 20-9-9 20-2-9z" />
  </svg>
);

const DepotGlyph = () => (
  <svg width="12" height="12" viewBox="0 0 24 24" fill="none" stroke="currentColor" strokeWidth="2.500" strokeLinejoin="round">
    <path d="M3 21V9q0-1 1-1.500L12 3l8 4.500q1 .5 1 1.500v12z" />
    <path d="M8 21v-7q0-3 4-3t4 3v7M12 15v6" />
  </svg>
);

const MapPanel = () => (
  <section className="relative min-h-0 flex-[556] overflow-hidden">
    <MapCanvas />
    <div className="absolute top-4 left-4 w-11">
      <button type="button" aria-label="Expand map" className="relative z-10 flex h-[33px] w-full items-center rounded-md border border-slate-200 bg-white pl-2 text-slate-600 shadow">
        <Maximize2 size={16} strokeWidth={1.8} />
      </button>
      <div className="mt-[9px] flex flex-col items-center gap-[9px] rounded-lg bg-white/55 py-[5px] backdrop-blur-sm">
        {mapTools.map(({ label, icon: Icon, dot, enabled }) => (
          <button
            key={label}
            type="button"
            aria-label={label}
            disabled={!enabled}
            className={
              enabled
                ? 'flex h-[33px] w-[33px] items-center justify-center rounded-md border border-slate-200 bg-white shadow-sm'
                : 'flex h-[31px] w-[33px] items-center justify-center rounded-md bg-white/75'
            }
          >
            <span className={`flex h-4 w-4 items-center justify-center rounded-full text-white ${dot}`}>
              {label === 'Navigation' ? <NavArrow /> : label === 'Depots' ? <DepotGlyph /> : <Icon size={11} strokeWidth={2.2} />}
            </span>
          </button>
        ))}
      </div>
    </div>
    <button type="button" aria-label="Map layers" className="absolute top-[13px] right-[46px] flex h-[33px] w-[33px] items-center justify-center rounded-md bg-white text-slate-600 shadow-md">
      <Layers size={16} strokeWidth={1.8} />
    </button>
    <div className="absolute right-[6px] bottom-[10px] w-[30px] divide-y divide-gray-300 rounded bg-white text-gray-800 shadow">
      <button type="button" aria-label="Zoom in" className="flex h-[29px] w-full items-center justify-center">
        <Plus size={15} strokeWidth={4} />
      </button>
      <button type="button" aria-label="Zoom out" className="flex h-[29px] w-full items-center justify-center">
        <Minus size={15} strokeWidth={4} />
      </button>
    </div>
    <button type="button" aria-label="Map information" className="absolute bottom-[38px] left-3 flex h-5 w-5 items-center justify-center rounded-full bg-white/80">
      <svg width="14" height="14" viewBox="0 0 14 14">
        <circle cx="7" cy="7" r="7" />
        <path d="M7 3v1.500M5.500 6.500H7V10.500M5.500 10.500h3" stroke="#fff" strokeWidth="1.800" fill="none" />
      </svg>
    </button>
    <a href="#" className="absolute bottom-[6px] left-[6px] block">
      <svg width="88" height="24" viewBox="0 0 88 24" aria-label="mapbox">
        <circle cx="11" cy="12" r="9" fill="none" stroke="#999" strokeWidth="3.500" />
        <circle cx="11" cy="12" r="9" fill="#fff" fillOpacity="0.900" stroke="#fff" strokeWidth="1.500" />
        <path d="M6 17q-1-7 3-9.500 4-2 6 1t-1 6q-3 3-8 2.500z" fill="#999" />
        <path d="m11.500 8 .9 2.100 2.100.9-2.100.9-.9 2.100-.9-2.100-2.100-.9 2.100-.9z" fill="#fff" />
        <text x="24" y="17" fontSize="16" stroke="#999" strokeWidth="2.500" paintOrder="stroke" fill="#fff" className="font-['Inter',sans-serif] font-bold">mapbox</text>
      </svg>
    </a>
  </section>
);

/* ---------- Unscheduled ---------- */

const UnscheduledPanel = () => (
  <section className="flex min-h-0 flex-[238] flex-col bg-white">
    <div className="flex h-[42px] shrink-0 items-end border-b border-slate-200 bg-[#f9fafc] px-4">
      <button type="button" className="-mb-px flex h-[33px] items-center gap-[6px] rounded-t-lg border border-b-0 border-slate-200 bg-white px-[11px] text-[10px] font-semibold text-blue-800">
        UNSCHEDULED
        <span className="flex h-[19px] w-[15px] items-center justify-center rounded-full bg-[#e8ebf7] text-[11px] text-[#2f55e6]">0</span>
      </button>
    </div>
    <div className="flex h-[45px] shrink-0 items-center border-b border-slate-200 bg-[#f9fafc] pr-[13px] pl-[18px]">
      <IconButton label="Refresh"><RefreshCw size={13} /></IconButton>
      <div className="ml-3"><IconButton label="Copy"><Copy size={14} /></IconButton></div>
      <label className="ml-[10px] flex h-[25px] flex-1 items-center gap-1 rounded border border-slate-200 bg-white px-2">
        <Search size={12} className="text-slate-500" />
        <input type="text" aria-label="Search unscheduled orders" placeholder="Search orders..." className="min-w-0 flex-1 bg-transparent text-[10px] outline-none placeholder:text-slate-500" />
      </label>
      <div className="mx-[10px]"><IconButton label="Filter"><Funnel size={14} /></IconButton></div>
      <select aria-label="Type" className="h-6 w-[76px] rounded border border-slate-200 bg-white px-[6px] text-[10px] text-slate-500">
        <option>Type</option>
      </select>
      <select aria-label="Depot" className="ml-2 h-6 w-[164px] rounded border border-slate-200 bg-white px-[6px] text-[10px] text-slate-500">
        <option>Depot</option>
      </select>
    </div>
    <table className="w-full table-fixed">
      <colgroup>
        <col className="w-[59px]" />
        <col className="w-[157px]" />
        <col className="w-[99px]" />
        <col className="w-[123px]" />
        <col className="w-[146px]" />
        <col />
        <col className="w-[79px]" />
      </colgroup>
      <thead>
        <tr className="h-[30px] border-b border-slate-200 bg-[#f9fafc]">
          <th className="pl-3 text-left">
            <input type="checkbox" aria-label="Select all unscheduled orders" className="mb-1 block h-[13px] w-[13px]" />
          </th>
          <HeadCell>ORDER NO</HeadCell>
          <HeadCell>DATE</HeadCell>
          <HeadCell>CLIENT</HeadCell>
          <HeadCell>ADDRESS</HeadCell>
          <HeadCell>WEIGHT KG</HeadCell>
          <HeadCell>ACTIONS</HeadCell>
        </tr>
      </thead>
      <tbody>
        <tr className="h-[52px]">
          <td colSpan={7} className="text-center text-sm text-slate-500">No unscheduled orders</td>
        </tr>
      </tbody>
    </table>
  </section>
);

export default function App() {
  return (
    <div className="flex h-screen overflow-hidden border-b border-[#5a5a5a] bg-white font-['Inter',sans-serif] antialiased">
      <Sidebar />
      <div className="flex min-w-0 flex-1 flex-col">
        <Header />
        <main className="flex min-h-0 flex-1">
          <div className="grid min-w-0 flex-[838] grid-cols-1 grid-rows-[273fr_12px_275fr_12px_234fr]">
            <RoutesPanel />
            <RowHandle />
            <SitesPanel />
            <RowHandle />
            <OrdersPanel />
          </div>
          <div className="w-2 shrink-0 border-r-4 border-slate-50 bg-gray-300" />
          <div className="flex min-w-0 flex-[834] flex-col">
            <MapPanel />
            <div className="flex h-3 shrink-0 items-center border-b border-slate-200 bg-slate-100">
              <span className="h-1 w-full bg-gray-300" />
            </div>
            <UnscheduledPanel />
          </div>
        </main>
      </div>
    </div>
  );
}
